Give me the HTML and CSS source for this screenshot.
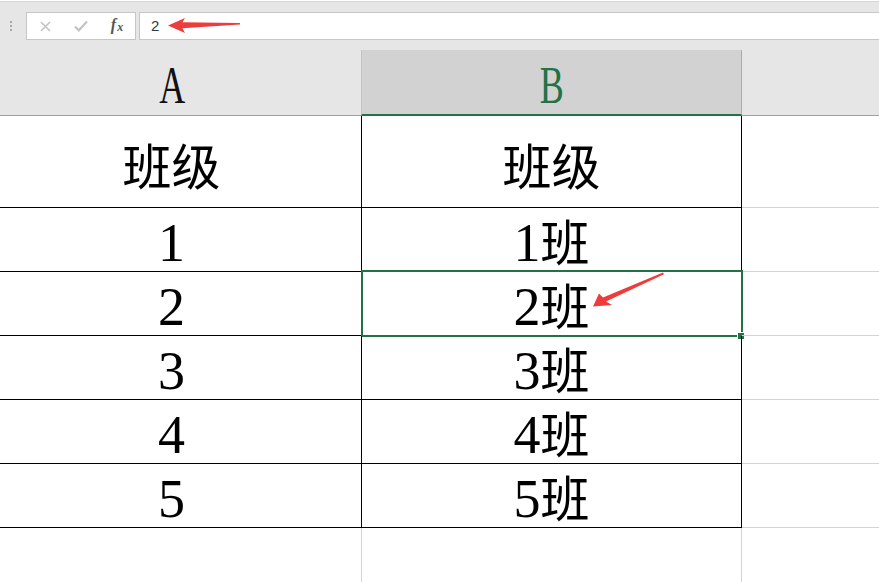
FILE: index.html
```html
<!DOCTYPE html>
<html lang="zh-CN">
<head>
<meta charset="utf-8">
<title>Sheet</title>
<link rel="stylesheet" href="styles.css">
</head>
<body>
<div class="app">
  <div class="fbar">
    <div class="grip"><i></i><i></i><i></i></div>
    <div class="namebox">
      <span class="slot">
        <svg width="11" height="11" viewBox="0 0 11 11"><path d="M1 1L10 10M10 1L1 10" stroke="#c4c4c4" stroke-width="1.6" fill="none"/></svg>
      </span>
      <span class="slot">
        <svg width="14" height="12" viewBox="0 0 14 12"><path d="M1 6.5L4.8 10.3L13 1.5" stroke="#c4c4c4" stroke-width="2.2" fill="none"/></svg>
      </span>
      <span class="slot fx"><i>f</i><span class="fxx">x</span></span>
    </div>
    <div class="formula">2</div>
  </div>

  <div class="sheet">
    <div class="hd hA"><span class="col">A</span></div>
    <div class="hd hBwrap"><div class="hB"><span class="col">B</span></div></div>
    <div class="hd hC"></div>

    <div class="cell first a"><span class="han">班级</span></div>
    <div class="cell first b"><span class="han">班级</span></div>
    <div class="cell first c"></div>

    <div class="cell a">1</div>
    <div class="cell b">1<span class="han">班</span></div>
    <div class="cell c"></div>

    <div class="cell a">2</div>
    <div class="cell b selected">2<span class="han">班</span><div class="sel"><div class="handle"></div></div></div>
    <div class="cell c"></div>

    <div class="cell a">3</div>
    <div class="cell b">3<span class="han">班</span></div>
    <div class="cell c"></div>

    <div class="cell a">4</div>
    <div class="cell b">4<span class="han">班</span></div>
    <div class="cell c"></div>

    <div class="cell a">5</div>
    <div class="cell b">5<span class="han">班</span></div>
    <div class="cell c"></div>

    <div class="cell empty a"></div>
    <div class="cell empty b"></div>
    <div class="cell empty c"></div>
  </div>

  <svg class="arrows" width="879" height="582" viewBox="0 0 879 582">
    <polygon points="168,25.5 185,18 182.5,22.3 240,23 240,24.6 182.5,28.2 185,33" fill="#ee3c3c"/>
    <polygon points="593,306.5 599,293.5 603,297.5 663,272.5 664,274.2 606,301.5 612,305" fill="#ee3c3c"/>
  </svg>
</div>
</body>
</html>
```

FILE: styles.css
```css
* { box-sizing: border-box; }

html, body {
  margin: 0;
  padding: 0;
  background: #ffffff;
}

body {
  width: 879px;
  height: 582px;
  overflow: hidden;
  font-family: "Liberation Serif", "Noto Sans CJK SC", serif;
}

.app {
  position: relative;
  width: 879px;
  height: 582px;
  overflow: hidden;
}

/* formula bar */
.fbar {
  margin-top: 1px;
  border-top: 1px solid #d6d6d6;
  background: #e6e6e6;
  padding-top: 10px;
  display: flex;
  align-items: flex-start;
  height: 39px;
}

.grip {
  display: flex;
  flex-direction: column;
  gap: 2px;
  margin: 9px 14px 0 10px;
}

.grip i {
  display: block;
  width: 2px;
  height: 2px;
  background: #a8a8a8;
}

.namebox {
  width: 110px;
  height: 28px;
  background: #ffffff;
  border: 1px solid #c6c6c6;
  display: flex;
  align-items: center;
}

.slot {
  width: 36px;
  height: 26px;
  display: flex;
  align-items: center;
  justify-content: center;
}

.slot svg { display: block; }

.fx {
  color: #555555;
  font-family: "Liberation Serif", serif;
  font-size: 16px;
  line-height: 1;
  padding-bottom: 2px;
}

.fx i {
  font-style: italic;
  font-weight: bold;
}

.fxx {
  font-size: 12px;
  font-style: italic;
  font-weight: bold;
  margin-left: 1px;
  position: relative;
  top: 2px;
}

.formula {
  flex: 1;
  margin-left: 3px;
  height: 28px;
  background: #ffffff;
  border: 1px solid #c6c6c6;
  border-right: none;
  padding-left: 11px;
  font-family: "Liberation Sans", sans-serif;
  font-size: 15px;
  line-height: 26px;
  color: #333842;
}

/* sheet */
.sheet {
  margin-left: -18px;
  width: 897px;
  display: grid;
  grid-template-columns: 380px 380px 1fr;
  grid-auto-rows: 64px;
  grid-template-rows: 76px 92px;
}

.hd {
  background: #e6e6e6;
  text-align: center;
  font-size: 53px;
}

.col {
  display: inline-block;
  transform: scaleX(0.68);
}

.hA, .hC {
  border-bottom: 1px solid #a0a0a0;
}

.hA {
  padding-top: 16px;
  line-height: 58px;
  color: #111111;
}

.hBwrap {
  padding-top: 10px;
}

.hB {
  height: 66px;
  background: #d2d2d2;
  border-left: 1px solid #c4c4c4;
  margin-left: -1px;
  border-right: 1px solid #ababab;
  border-bottom: 2px solid #217346;
  padding-top: 6px;
  line-height: 58px;
  color: #217346;
}

.cell {
  position: relative;
  text-align: center;
  font-size: 54px;
  color: #000000;
  padding-top: 7px;
  line-height: 56px;
}

.cell.first {
  padding-top: 12px;
  line-height: 79px;
}

.han {
  font-family: "Noto Sans CJK SC", sans-serif;
  font-size: 49px;
  line-height: 0;
}

.cell.a, .cell.b {
  border-right: 1px solid #000000;
  border-bottom: 1px solid #000000;
}

.cell.c {
  border-bottom: 1px solid #d4d4d4;
}

.cell.empty {
  border-bottom: none;
  height: 60px;
}

.cell.empty.a, .cell.empty.b {
  border-right: 1px solid #d4d4d4;
}

.sel {
  position: absolute;
  left: -1px;
  right: -2px;
  top: -2px;
  bottom: -2px;
  border: 2px solid #217346;
}

.handle {
  position: absolute;
  right: -4px;
  bottom: -5px;
  width: 8px;
  height: 8px;
  background: #217346;
  border: 1px solid #ffffff;
}

.arrows {
  position: absolute;
  left: 0;
  top: 0;
  pointer-events: none;
}
```
